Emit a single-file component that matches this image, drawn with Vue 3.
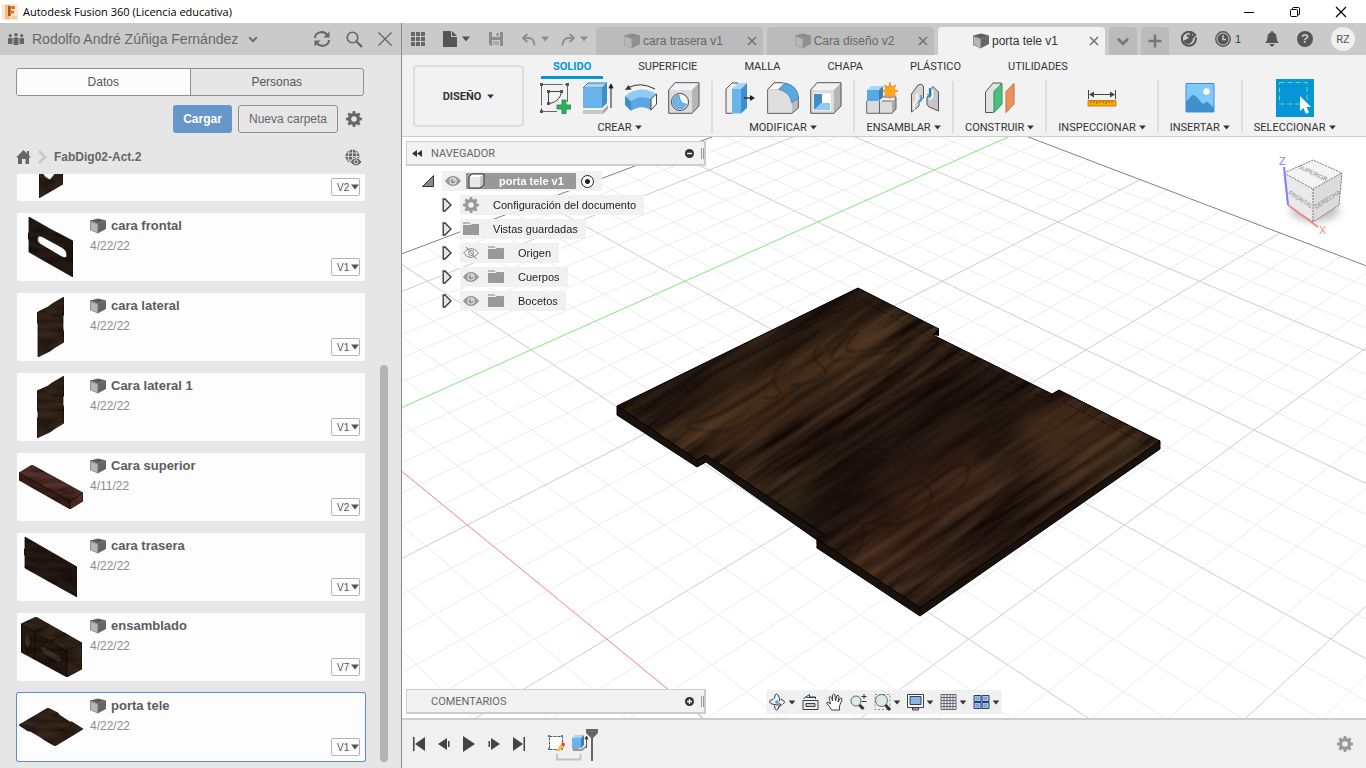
<!-- App.vue -->
<template>
  <div class="window">
    <!-- shared icons and textures -->
    <svg class="defs" aria-hidden="true">
      <defs>
        <symbol id="i-cube" viewBox="0 0 16 16">
          <path d="M0 2.500 8 0.500 16 2.500 8 5.500Z" fill="#5c5c5c" />
          <path d="M7.500 5.500 16 2.500V11L7.500 15.500Z" fill="#666" />
          <path d="M0 2.500 8 5.500V15.500L0 12Z" fill="#777" />
          <path d="M.6 3.800 7.500 6.300V14.700L.6 11.600Z" fill="#b4b7b7" />
        </symbol>
        <symbol id="i-gear" viewBox="0 0 16 16">
          <path fill="currentColor" fill-rule="evenodd" d="M6.800 0h2.400l.4 2.200 1.300.5L12.700 1.500l1.800 1.800-1.200 1.800.5 1.300 2.200.4v2.400l-2.200.4-.5 1.300 1.200 1.800-1.800 1.800-1.800-1.200-1.300.5-.4 2.200H6.800l-.4-2.200-1.300-.5-1.800 1.200-1.800-1.800 1.200-1.800-.5-1.300L0 9.200V6.800l2.200-.4.500-1.300L1.500 3.300l1.800-1.800 1.800 1.200 1.300-.5ZM8 5.200a2.800 2.800 0 1 0 0 5.600 2.800 2.800 0 0 0 0-5.600Z" />
        </symbol>
        <symbol id="i-eye" viewBox="0 0 16 12">
          <path d="M0 6Q3.500 1 8 1t8 5q-3.500 5-8 5T0 6Z" fill="#999" />
          <circle cx="8" cy="6" r="3.600" fill="#f2f2f2" />
          <circle cx="8" cy="6" r="2.600" fill="#999" />
          <circle cx="8.800" cy="5.200" r="1" fill="#f2f2f2" />
        </symbol>
        <symbol id="i-eye-off" viewBox="0 0 16 12">
          <g fill="none" stroke="#888">
            <path d="M.6 6Q4 1.500 8 1.500T15.400 6q-3.400 4.500-7.400 4.500T.6 6Z" />
            <circle cx="8" cy="6" r="2.500" />
            <path d="M3 0 13.500 12" />
          </g>
        </symbol>
        <symbol id="i-folder" viewBox="0 0 16 14">
          <path d="M0 0H6L7.500 1.500V2H0Z" fill="#b8b8b8" />
          <path d="M0 3H7.500L9 2H16V13H0Z" fill="#999" />
        </symbol>
        <symbol id="i-x" viewBox="0 0 10 10">
          <path d="M1 1 9 9M9 1 1 9" fill="none" stroke="currentColor" stroke-width="1.500" />
        </symbol>
        <symbol id="i-caret" viewBox="0 0 8 6">
          <path d="M0 .5H8L4 5.500Z" fill="currentColor" />
        </symbol>
        <symbol id="i-chevron" viewBox="0 0 12 8">
          <path d="M1.500 1.500 6 6 10.500 1.500" fill="none" stroke="currentColor" stroke-width="2.400" />
        </symbol>
        <symbol id="i-expand" viewBox="0 0 10 14">
          <path d="M1.200 1H3L9 7 3 13H1.200Z" fill="#e4e4e4" stroke="#333" stroke-width="1.300" />
        </symbol>
        <filter id="wood" x="0" y="0" width="1" height="1" color-interpolation-filters="sRGB">
          <feTurbulence type="fractalNoise" baseFrequency="0.009 0.11" numOctaves="5" seed="23" />
          <feColorMatrix values=".32 0 0 0 .01  .24 0 0 0 -.01  .16 0 0 0 -.005  0 0 0 0 1" />
        </filter>
        <filter id="wood-thumb" x="0" y="0" width="1" height="1" color-interpolation-filters="sRGB">
          <feTurbulence type="fractalNoise" baseFrequency="0.05 0.2" numOctaves="2" seed="4" result="n" />
          <feColorMatrix in="n" values="0 0 0 0 0  0 0 0 0 0  0 0 0 0 0  .9 0 0 0 -.3" result="d" />
          <feComposite in="d" in2="SourceGraphic" operator="in" result="k" />
          <feMerge>
            <feMergeNode in="SourceGraphic" />
            <feMergeNode in="k" />
          </feMerge>
        </filter>
        <filter id="soft" x="-.5" y="-.5" width="2" height="2" color-interpolation-filters="sRGB"><feGaussianBlur stdDeviation="11" /></filter>
        <filter id="soft-line" x="-.2" y="-.2" width="1.400" height="1.400" color-interpolation-filters="sRGB"><feGaussianBlur stdDeviation="1" /></filter>
        <filter id="shadow" x="-.4" y="-.8" width="1.800" height="2.600" color-interpolation-filters="sRGB"><feGaussianBlur stdDeviation="4" /></filter>
      </defs>
    </svg>

    <header class="titlebar">
      <svg class="logo" width="16" height="16" viewBox="0 0 16 16">
        <rect width="16" height="16" fill="#fbe6d3" />
        <path d="M3 1H8V15H3Z" fill="#f3b988" />
        <path d="M6 2H13V5H9V6.500H12V9.500H9V12H6Z" fill="#d9772b" />
        <path d="M6 2H8V12H6Z" fill="#a8571c" />
        <path d="M9 12H15V15H9Z" fill="#f7cda6" />
      </svg>
      <h1>Autodesk Fusion 360 (Licencia educativa)</h1>
      <div class="window-buttons">
        <button aria-label="Minimizar"><svg width="12" height="12" viewBox="0 0 12 12"><path d="M1 6.500H11" stroke="#000" /></svg></button>
        <button aria-label="Restaurar">
          <svg width="12" height="12" viewBox="0 0 12 12" fill="none" stroke="#000">
            <rect x="1.500" y="3.500" width="7" height="7" rx="1" />
            <path d="M3.500 3V2.500Q3.500 1.500 4.500 1.500H9.500Q10.500 1.500 10.500 2.500V8Q10.500 9 9 9" />
          </svg>
        </button>
        <button aria-label="Cerrar"><svg width="12" height="12" viewBox="0 0 12 12"><path d="M1 1 11 11M11 1 1 11" stroke="#000" stroke-width="1.200" /></svg></button>
      </div>
    </header>

    <div class="body">
      <!-- data panel -->
      <aside class="panel">
        <div class="panel-head">
          <svg width="16" height="12" viewBox="0 0 16 12" fill="#666">
            <circle cx="2.300" cy="2.600" r="1.600" /><circle cx="8" cy="1.800" r="1.800" /><circle cx="13.700" cy="2.600" r="1.600" />
            <path d="M0 5H4.500V11H0ZM5.500 4.500H10.500V12H5.500ZM11.500 5H16V11H11.500Z" />
          </svg>
          <button class="team">Rodolfo André Zúñiga Fernández <svg width="10" height="7"><use href="#i-chevron" /></svg></button>
          <button aria-label="Actualizar">
            <svg width="18" height="16" viewBox="0 0 18 16">
              <path d="M2 7A6.500 6 0 0 1 14 4M16 9A6.500 6 0 0 1 4 12" fill="none" stroke="#666" stroke-width="2" />
              <path d="M16.500 0.500V6.500H10.500ZM1.500 15.500V9.500H7.500Z" fill="#666" />
            </svg>
          </button>
          <button aria-label="Buscar">
            <svg width="17" height="17" viewBox="0 0 17 17" fill="none" stroke="#666">
              <circle cx="6.500" cy="6.500" r="5.300" stroke-width="1.600" />
              <path d="M10.500 10.500 16 16" stroke-width="2.200" />
            </svg>
          </button>
          <button aria-label="Cerrar panel"><svg width="14" height="14" viewBox="0 0 14 14"><path d="M.5.5 13.500 13.500M13.500.5.5 13.500" stroke="#666" stroke-width="1.300" /></svg></button>
        </div>

        <div class="segmented">
          <button :class="{ active: panelTab === 'Datos' }" @click="panelTab = 'Datos'">Datos</button>
          <button :class="{ active: panelTab === 'Personas' }" @click="panelTab = 'Personas'">Personas</button>
        </div>

        <div class="actions">
          <button class="primary">Cargar</button>
          <button class="secondary">Nueva carpeta</button>
          <button class="gear" aria-label="Ajustes"><svg width="16" height="16"><use href="#i-gear" /></svg></button>
        </div>

        <nav class="crumbs">
          <a href="#" aria-label="Inicio">
            <svg width="15" height="14" viewBox="0 0 15 14"><path d="M7.500 0 11 3.500V1H13V5.500L15 7.600H13V14H9.500V9H6V14H2V7.600H0Z" fill="#666" /></svg>
          </a>
          <svg width="9" height="14" viewBox="0 0 9 14"><path d="M1 1 7 7 1 13" fill="none" stroke="#c8c8c8" stroke-width="2.600" /></svg>
          <a href="#" class="project">FabDig02-Act.2</a>
          <svg width="17" height="17" viewBox="0 0 17 17">
            <circle cx="7.500" cy="7.500" r="7" fill="#666" />
            <path d="M7.500 0V15M.5 7.500H14.500M1.500 4H13.500M1.500 11H13.500M4.500 1Q1.500 7 4.500 14M10.500 1Q13.500 7 10.500 14" fill="none" stroke="#e6e6e6" stroke-width=".8" />
            <path d="M5 13Q8 8.500 11 8.500T17 13Q14 17 11 17T5 13Z" fill="#666" stroke="#e6e6e6" />
            <circle cx="11" cy="12.800" r="2" fill="#666" stroke="#e6e6e6" />
          </svg>
        </nav>

        <div class="list-area">
          <ul class="cards">
            <li v-for="item in items" :key="item.id" class="card" :class="{ selected: item.id === selectedId }" @click="selectedId = item.id">
              <svg class="thumb" width="68" height="68" viewBox="0 0 68 68">
                <g filter="url(#wood-thumb)">
                  <path v-for="(s, k) in item.shapes" :key="k" :d="s[0]" :fill="s[1]" fill-rule="evenodd" stroke="#0c0806" stroke-width=".7" />
                </g>
              </svg>
              <div class="info">
                <h2 v-if="item.name"><svg width="16" height="16"><use href="#i-cube" /></svg>{{ item.name }}</h2>
                <p v-if="item.date">{{ item.date }}</p>
              </div>
              <label class="version">
                <select aria-label="Versión"><option>{{ item.version }}</option></select>
                <svg width="8" height="6"><use href="#i-caret" /></svg>
              </label>
            </li>
          </ul>
          <div class="track"><div class="thumb-bar"></div></div>
        </div>
      </aside>

      <main class="main">
        <div class="topbar">
          <div class="quick">
            <button aria-label="Panel de datos">
              <svg width="14" height="14" viewBox="0 0 14 14" fill="#666"><path d="M0 0H4V4H0ZM5 0H9V4H5ZM10 0H14V4H10ZM0 5H4V9H0ZM5 5H9V9H5ZM10 5H14V9H10ZM0 10H4V14H0ZM5 10H9V14H5ZM10 10H14V14H10Z" /></svg>
            </button>
            <button class="file" aria-label="Archivo">
              <svg width="14" height="16" viewBox="0 0 14 16" fill="#555"><path d="M0 0H8V6H14V16H0ZM9 0 14 5H9Z" /></svg>
              <svg width="8" height="6"><use href="#i-caret" /></svg>
            </button>
            <button class="save" aria-label="Guardar">
              <svg width="14" height="14" viewBox="0 0 14 14"><path d="M0 0H14V14H2L0 12Z" fill="#8c8c8c" /><path d="M3 0H11V5H3ZM3 8H11V14H3Z" fill="#cacaca" /><path d="M7.500 1H9.500V4H7.500ZM4 9.500H10V10.500H4ZM4 11.500H10V12.500H4Z" fill="#8c8c8c" /></svg>
            </button>
            <button class="dim" aria-label="Deshacer">
              <svg width="14" height="13" viewBox="0 0 14 13"><path d="M5.500 1 1 5 5.500 9M1.500 5H7Q12 5.500 12.500 12.500" fill="none" stroke="#8f8f8f" stroke-width="2" /></svg>
              <svg width="8" height="6"><use href="#i-caret" /></svg>
            </button>
            <button class="dim" aria-label="Rehacer">
              <svg width="14" height="13" viewBox="0 0 14 13"><path d="M8.500 1 13 5 8.500 9M12.500 5H7Q2 5.500 1.500 12.500" fill="none" stroke="#8f8f8f" stroke-width="2" /></svg>
              <svg width="8" height="6"><use href="#i-caret" /></svg>
            </button>
          </div>
          <div class="docs">
            <div v-for="doc in docs" :key="doc" class="doc" :class="{ active: doc === activeDoc }">
              <button class="doc-name" @click="activeDoc = doc"><svg width="16" height="16"><use href="#i-cube" /></svg>{{ doc }}</button>
              <button class="doc-close" :aria-label="'Cerrar ' + doc"><svg width="10" height="10"><use href="#i-x" /></svg></button>
            </div>
            <button class="square" aria-label="Más documentos"><svg width="14" height="9"><use href="#i-chevron" /></svg></button>
            <button class="square" aria-label="Nuevo diseño"><svg width="14" height="14" viewBox="0 0 14 14"><path d="M7 .5V13.500M.5 7H13.500" stroke="#777" stroke-width="2.600" /></svg></button>
          </div>
          <div class="status">
            <button aria-label="Extensiones">
              <svg width="16" height="16" viewBox="0 0 16 16"><path d="M13.500 3.500A7 7 0 1 0 14.800 6.500" fill="none" stroke="#555" stroke-width="2" /><path d="M2 10Q5 14 9 12.500L11.500 10 12 7.500 15.500 4 14 2 11.500 5 11 1 8.500 1.500 9 4.500 6.500 3 5.500 5 8 7Z" fill="#555" /></svg>
            </button>
            <button class="jobs" aria-label="Estado de trabajos">
              <svg width="16" height="16" viewBox="0 0 16 16"><circle cx="8" cy="8" r="7.200" fill="none" stroke="#555" stroke-width="1.400" /><circle cx="8" cy="8" r="5.500" fill="#555" /><path d="M8 4V8.500H11" fill="none" stroke="#cacaca" stroke-width="1.400" /></svg>
              1
            </button>
            <button aria-label="Notificaciones">
              <svg width="14" height="16" viewBox="0 0 14 16"><path d="M7 0Q8.300 0 8.300 1.600 11.500 2.500 11.500 6.500 11.500 10 14 12H0Q2.500 10 2.500 6.500 2.500 2.500 5.700 1.600 5.700 0 7 0ZM4.800 13H9.200Q9 15.500 7 15.500T4.800 13Z" fill="#555" /></svg>
            </button>
            <button class="help" aria-label="Ayuda">?</button>
            <button class="avatar">RZ</button>
          </div>
        </div>

        <div class="ribbon">
          <button class="workspace">DISEÑO <svg width="7" height="5"><use href="#i-caret" /></svg></button>
          <div class="ribbon-main">
            <nav class="ribbon-tabs">
              <button v-for="tab in ribbonTabs" :key="tab" :class="{ active: tab === ribbonTab }" @click="ribbonTab = tab">{{ tab }}</button>
            </nav>
            <div class="groups">
              <div v-for="g in groups" :key="g.name" class="group">
                <div class="tools">
                  <button v-for="t in g.tools" :key="t" :class="t" :aria-label="g.name + ' ' + t">
                    <svg v-if="t === 'sketch'" width="32" height="32" viewBox="0 0 32 32">
                      <path d="M2.500 2.500H28.500V20M2.500 2.500V29.500H18" fill="none" stroke="#666" stroke-dasharray="21 2.500" />
                      <path d="M9.500 20V9.500H22.500Q21.500 19 11 21.500" fill="none" stroke="#444" />
                      <path d="M1 1H4V4H1ZM27 1H30V4H27ZM1 28H4V31H1ZM8 8H11V11H8ZM21 8H24V11H21ZM8 20H11V23H8Z" fill="#555" />
                      <path d="M23 18H27V23H32V27H27V32H23V27H18V23H23Z" fill="#2bb35a" stroke="#148a3c" stroke-width=".8" />
                    </svg>
                    <svg v-else-if="t === 'extrude'" width="32" height="32" viewBox="0 0 32 32">
                      <path d="M1 28H21L26 23V27L21 32H1Z" fill="#aaa" /><path d="M1 28H21V32H1Z" fill="#c9c9c9" />
                      <path d="M1 6 6 1H25L20 6Z" fill="#a5d5f8" stroke="#3580b5" /><path d="M1 6H20V26H1Z" fill="#6ab4ea" /><path d="M20 6 25 1V21L20 26Z" fill="#3d8fca" />
                      <path d="M29 26V4M27 6 29 2 31 6Z" stroke="#222" fill="#222" />
                    </svg>
                    <svg v-else-if="t === 'revolve'" width="32" height="32" viewBox="0 0 32 32">
                      <path d="M3 6Q15-1 30 7" fill="none" stroke="#333" /><path d="M0 8 3.500 3 6.500 7.500Z" fill="#333" />
                      <path d="M0 14Q14 2 32 12L26 17Q16 12 6 19Z" fill="#90caf5" /><path d="M0 14 6 19V29L0 23Z" fill="#3d8fca" />
                      <path d="M6 19Q16 12 26 17V28Q16 22 6 29Z" fill="#5aa8e2" /><path d="M26 17 31.500 12V22L26 28Z" fill="#fff" stroke="#444" />
                    </svg>
                    <svg v-else-if="t === 'hole'" width="32" height="32" viewBox="0 0 32 32">
                      <path d="M.7 8 7 .7H31L24 8Z" fill="#f2f2f2" /><path d="M24 8 31 .7V24L24 31.300Z" fill="#b5b5b5" /><path d="M.7 8H24V31.300H.7Z" fill="#dcdcdc" />
                      <path d="M.7 8 7 .7H31V24L24 31.300H.7Z" fill="none" stroke="#555" />
                      <circle cx="12" cy="20" r="8.500" fill="#fff" stroke="#444" /><path d="M11 13A7 7 0 1 0 18.500 22Q12 22 11 13Z" fill="#6ab4ea" stroke="#3580b5" stroke-width=".6" />
                    </svg>
                    <svg v-else-if="t === 'press'" width="32" height="32" viewBox="0 0 32 32">
                      <path d="M2 7 8 1H14V26L8 31.300H2Z" fill="#eee" stroke="#555" /><path d="M8 7 14 1H23L17 7Z" fill="#a5d5f8" /><path d="M8 7H17V31.500H8Z" fill="#6ab4ea" /><path d="M17 7 23 1V26L17 31.500Z" fill="#3d8fca" />
                      <path d="M20 16H28" stroke="#222" stroke-width="1.300" /><path d="M26 13 31 16 26 19Z" fill="#222" />
                    </svg>
                    <svg v-else-if="t === 'fillet'" width="32" height="32" viewBox="0 0 32 32">
                      <path d="M.7 31.300V7.500L7 .7H15Q31 3 31.300 17V26L25 31.300Z" fill="#bdbdbd" stroke="#555" />
                      <path d="M1.200 7.500H11Q23 9 25 23V30.800H1.200Z" fill="#dedede" /><path d="M2 7 7.500 1.500H17L11 7Z" fill="#fafafa" />
                      <path d="M12 7.500 18 1Q31 4 31.500 16L25 21Q23 10 12 7.500Z" fill="#5aa8e2" stroke="#3580b5" stroke-width=".7" />
                    </svg>
                    <svg v-else-if="t === 'shell'" width="32" height="32" viewBox="0 0 32 32">
                      <path d="M.7 8 7 .7H31L24 8Z" fill="#f2f2f2" /><path d="M24 8 31 .7V24L24 31.300Z" fill="#b5b5b5" /><path d="M.7 8H24V31.300H.7Z" fill="#dcdcdc" />
                      <path d="M.7 8 7 .7H31V24L24 31.300H.7Z" fill="none" stroke="#555" />
                      <path d="M3.500 11.500H21V28.500H3.500Z" fill="#fff" /><path d="M4 12H12V21L4 28Z" fill="#3d8fca" /><path d="M4 28 11 21H20V28Z" fill="#90caf5" />
                    </svg>
                    <svg v-else-if="t === 'component'" width="32" height="32" viewBox="0 0 32 32">
                      <path d="M.7 19H26V31.300H.7Z" fill="#dcdcdc" /><path d="M26 19 30 15V27L26 31.300Z" fill="#aaa" /><path d="M12 19 16 15H30L26 19Z" fill="#f2f2f2" />
                      <path d="M.7 19V31.300H26L30 27V15H16M13.500 19V31M16 19H26" fill="none" stroke="#666" />
                      <path d="M1 8 5 4H17L13 8Z" fill="#a5d5f8" /><path d="M1 8H13V19H1Z" fill="#5aa8e2" /><path d="M13 8 17 4V15L13 19Z" fill="#3580b5" />
                      <path d="M24 0 25.500 5 29.700 3 28.300 7.200 32 9 28.300 10.800 29.700 15 25.500 13 24 17 22.500 13 18.300 15 19.700 10.800 16 9 19.700 7.200 18.300 3 22.500 5Z" fill="#ffa51f" stroke="#cc7a00" stroke-width=".5" />
                    </svg>
                    <svg v-else-if="t === 'joint'" width="32" height="32" viewBox="0 0 32 32">
                      <path d="M2.500 12 9 3Q13.500 1 14.500 5V16L10 19V24L2.500 30Z" fill="#d4d4d4" stroke="#555" /><path d="M8 12V17L5 22V28" fill="none" stroke="#fff" stroke-width="1.500" />
                      <path d="M29.500 29 20 25Q17 23 18 19V15L21.500 13V7L24 4.500 29.500 10Z" fill="#c6c6c6" stroke="#555" /><path d="M23.500 8V15L20 18" fill="none" stroke="#fff" stroke-width="1.500" />
                      <path d="M12 13V20M20.500 6V14M18.500 12 20.500 15 22.500 12" stroke="#1c8fdc" fill="none" stroke-width="1.300" />
                    </svg>
                    <svg v-else-if="t === 'plane'" width="32" height="32" viewBox="0 0 32 32">
                      <path d="M1.500 10 9 1H17V22L9 30.500H1.500Z" fill="#e2e2e2" stroke="#555" /><path d="M10 9.500 18 1.500V22L10 30.500Z" fill="#4cc07f" stroke="#2c9159" />
                      <path d="M22 9.500 30 1.500V22L22 30.500Z" fill="#e6935f" stroke="#c46f3a" />
                    </svg>
                    <svg v-else-if="t === 'measure'" width="32" height="32" viewBox="0 0 32 32">
                      <path d="M2.500 8V17M29.500 8V17M4 12.500H28" stroke="#444" /><path d="M3 12.500 8 9.500V15.500ZM29 12.500 24 9.500V15.500Z" fill="#444" />
                      <path d="M2 18.500H30V24H2Z" fill="#ffa800" stroke="#b87300" stroke-width=".8" /><path d="M5 19V21M8 19V21M11 19V22M14 19V21M17 19V21M20 19V22M23 19V21M26 19V21" stroke="#7a4c00" stroke-width=".8" />
                    </svg>
                    <svg v-else-if="t === 'image'" width="32" height="32" viewBox="0 0 32 32">
                      <path d="M2 1.500H30V30H2Z" fill="#81c8fb" stroke="#3d8fca" /><path d="M2 20 8 13 11 13.500 19 22 23 19.500 30 26V30H2Z" fill="#3f90cb" /><circle cx="22.500" cy="9.500" r="3.300" fill="#fffbd8" />
                    </svg>
                    <svg v-else width="38" height="38" viewBox="0 0 38 38">
                      <path d="M3.500 3.500H31V25H3.500Z" fill="none" stroke="#5fe08a" stroke-dasharray="5 3" /><path d="M24 17V32L27.500 29 30 35 33 33.500 30.500 28H35Z" fill="#fff" />
                    </svg>
                  </button>
                </div>
                <button class="group-name">{{ g.name }} <svg width="7" height="5"><use href="#i-caret" /></svg></button>
              </div>
            </div>
          </div>
        </div>

        <section class="viewport">
          <svg class="scene" viewBox="402 137 964 581" preserveAspectRatio="xMidYMid slice">
            <defs>
              <clipPath id="floor"><path d="M871 77 2400 660V900H-400V556Z" /></clipPath>
              <clipPath id="top-face"><path :d="topFace" /></clipPath>
            </defs>
            <g clip-path="url(#floor)" fill="none">
              <path :d="grid.minor" stroke="#ececec" />
              <path :d="grid.major" stroke="#cdcdcd" />
              <path :d="grid.red" stroke="#ff9292" />
              <path :d="grid.green" stroke="#8cf58c" />
            </g>
            <path d="M871 77 2400 660M871 77-400 556" fill="none" stroke="#808080" />

            <path d="M617 406V415L697 467 706 462 817 540V548L920 616 1160 449V441L900 450Z" fill="#1a110c" stroke="#000" />
            <path d="M933 335 939 329V336Z" fill="#000" />
            <g clip-path="url(#top-face)">
              <rect class="board" x="540" y="200" width="700" height="500" filter="url(#wood)" />
              <g filter="url(#soft)">
                <path d="M670 440 740 360 880 310 890 350 830 400 740 450Z" fill="#6b4726" opacity=".32" />
                <path d="M740 540 830 440 980 350 1050 410 960 470 840 560Z" fill="#120b0a" opacity=".5" />
                <path d="M830 570 880 480 960 440 1000 480 930 540 870 600Z" fill="#5a3320" opacity=".3" />
                <path d="M1010 410 1070 400 1150 440 1050 480Z" fill="#6b4428" opacity=".35" />
                <path d="M617 400 858 284 890 300 650 430Z" fill="#120c0a" opacity=".5" />
                <path d="M770 500 830 460 790 520Z" fill="#4e4424" opacity=".5" />
                <path d="M1090 500 1130 445 1150 450 1110 485Z" fill="#4e4424" opacity=".5" />
                <ellipse cx="880" cy="507" rx="14" ry="7" fill="#000" opacity=".8" />
              </g>
              <g filter="url(#soft-line)" fill="none" stroke="#0b0605" stroke-width="1.300" opacity=".55">
                <path d="M858 331Q838 352 852 352T915 338M850 334Q812 370 850 358L900 350M848 323Q800 350 820 365T790 385M820 330Q760 375 778 388 784 400 764 398M790 365Q740 410 702 420T725 432Q760 415 800 385" />
                <path d="M852 560Q868 540 862 525 880 520 905 505 925 485 958 465 978 460 960 490M845 535Q870 500 922 482 942 495 920 515 895 530 870 522" />
                <path d="M880 565Q950 500 1010 480M900 585Q970 530 1090 460M640 412Q740 360 810 325M820 460Q900 390 960 365M720 470Q790 410 870 370M750 480Q820 430 880 400" opacity=".6" />
              </g>
            </g>
            <path :d="topFace" fill="none" stroke="#000" />
            <path d="M632 412 862 300 930 337M935 341 1051 402M1063 402 1150 446M920 608V616M697 460V467M817 539V548M1052 394V402" fill="none" stroke="#000" stroke-dasharray="5 2" opacity=".5" />
          </svg>

          <svg class="viewcube" width="80" height="96" viewBox="1272 147 80 96">
            <ellipse cx="1315" cy="210" rx="24" ry="11" fill="#777" opacity=".5" filter="url(#shadow)" />
            <path d="M1284 173 1313 189V222L1288 205Z" fill="#e9e9e9" /><path d="M1313 189 1342 173 1339 205 1313 222Z" fill="#dcdcdc" /><path d="M1284 173 1313 160 1342 173 1313 189Z" fill="#f4f4f4" />
            <path d="M1284 173 1313 160 1342 173 1339 205 1313 222 1288 205ZM1284 173 1313 189 1342 173M1313 189V222" fill="none" stroke="#777" stroke-dasharray="2 1" />
            <path d="M1284 167 1288 205" stroke="#8080ff" stroke-width="2" /><path d="M1288 205 1318 227" stroke="#f58a8a" stroke-width="2" />
            <text class="face" x="1288" y="194" transform="rotate(32 1288 194)">FRONTAL</text>
            <text class="face" x="1316" y="209" transform="rotate(-32 1316 209)">DERECHA</text>
            <text class="face" x="1298" y="168" transform="rotate(26 1298 168)">SUPERIOR</text>
            <text class="axis z" x="1279" y="165">Z</text>
            <text class="axis x" x="1319" y="234">X</text>
          </svg>

          <div class="browser">
            <div class="bar">
              <svg width="10" height="7" viewBox="0 0 10 7"><path d="M5 0V7L0 3.500ZM10 0V7L5 3.500Z" fill="#333" /></svg>
              <span>NAVEGADOR</span>
              <button aria-label="Contraer"><svg width="9" height="9" viewBox="0 0 9 9"><circle cx="4.500" cy="4.500" r="4.500" fill="#333" /><path d="M2 4.500H7" stroke="#fff" stroke-width="1.400" /></svg></button>
              <i class="grip"></i>
            </div>
            <div class="row root">
              <svg class="open" width="12" height="12" viewBox="0 0 12 12"><path d="M11.500.5V11.500H.5Z" fill="#8a8a8a" stroke="#333" /></svg>
              <div class="row-body">
                <svg width="16" height="12"><use href="#i-eye" /></svg>
                <div class="root-name">
                  <svg width="17" height="16" viewBox="0 0 17 16"><path d="M1 4 4 1H16L13 4Z" fill="#fff" /><path d="M1 4H12V15H1Z" fill="#e8e8ee" /><path d="M12 4 16 1V12L12 15Z" fill="#c8c8cc" /><path d="M1 4 4 1H16V12L12 15H1Z" fill="none" stroke="#333" /></svg>
                  porta tele v1
                </div>
                <input type="radio" checked aria-label="Activar componente">
              </div>
            </div>
            <div v-for="node in nodes" :key="node.name" class="row">
              <svg width="10" height="14"><use href="#i-expand" /></svg>
              <div class="row-body">
                <svg v-if="node.icon === 'gear'" class="grey" width="16" height="16"><use href="#i-gear" /></svg>
                <svg v-if="node.eye" width="16" height="12"><use :href="'#' + node.eye" /></svg>
                <svg v-if="node.icon === 'folder'" width="16" height="14"><use href="#i-folder" /></svg>
                <span>{{ node.name }}</span>
              </div>
            </div>
          </div>

          <div class="bar comments">
            <span>COMENTARIOS</span>
            <button aria-label="Expandir"><svg width="9" height="9" viewBox="0 0 9 9"><circle cx="4.500" cy="4.500" r="4.500" fill="#333" /><path d="M2 4.500H7M4.500 2V7" stroke="#fff" stroke-width="1.400" /></svg></button>
            <i class="grip"></i>
          </div>

          <div class="navbar">
            <button aria-label="Órbita">
              <svg width="18" height="18" viewBox="0 0 18 18" fill="none" stroke="#3b3f4a"><path d="M6 12.500Q6 17 8 17T10.500 13M6 5.500Q6 1 8 1T11 5.500V8" /><path d="M5 6Q1 7 1 9 2 12 12 12M12 6Q16.500 7.500 16 9.500L14 11.500M10 10 13 12 10 14.500" /><path d="M8.500 7V11M6.500 9H10.500" stroke="#1c8fdc" /></svg>
              <svg width="7" height="5"><use href="#i-caret" /></svg>
            </button>
            <button aria-label="Mirar a"><svg width="18" height="18" viewBox="0 0 18 18" stroke="#3b3f4a"><path d="M1.500 7.500H16.500V16.500H1.500ZM2 5.500 8 1.500V4H14V6M5 4.500H14" fill="#f0f0f0" /><path d="M4.500 10.500H13.500V13.500H4.500Z" fill="#c9cbd4" /></svg></button>
            <button aria-label="Encuadre"><svg width="18" height="18" viewBox="0 0 18 18"><path d="M6 17Q4 13 1 10 2 8 5 11L3.500 4.500Q4.500 2.500 6 4.500L7 8 7 2Q8.500 0 9.500 2L10 8 11.500 2.500Q13 1.500 13.500 3.500L12.500 9 15 5Q17 5 16.500 7L14 13V17Z" fill="#fff" stroke="#3b3f4a" /></svg></button>
            <button aria-label="Zoom"><svg width="18" height="18" viewBox="0 0 18 18"><circle cx="6.500" cy="8" r="5" fill="#dcebeb" stroke="#5c6a6c" /><path d="M10 12 14 16" stroke="#333" stroke-width="3" /><path d="M14.500 1V6M12 3.500H17M12 8.500H17" stroke="#333" /></svg></button>
            <button aria-label="Ajustar">
              <svg width="18" height="18" viewBox="0 0 18 18"><path d="M1.500 1.500H16.500V16.500H1.500Z" fill="none" stroke="#888" stroke-dasharray="2 2" /><circle cx="8" cy="7.500" r="6" fill="#dcebe6" stroke="#5c6a6c" /><path d="M12 12 16.500 17" stroke="#333" stroke-width="3" /></svg>
              <svg width="7" height="5"><use href="#i-caret" /></svg>
            </button>
            <button aria-label="Visualización">
              <svg width="18" height="18" viewBox="0 0 18 18"><path d="M1 1.500H17V14.500H1Z" fill="#fff" stroke="#3b3f4a" /><path d="M3.500 3.500H14.500V11.500H3.500Z" fill="#8fb4e0" stroke="#27406e" /><path d="M6 15H12V17H6Z" fill="#ddd" stroke="#3b3f4a" /></svg>
              <svg width="7" height="5"><use href="#i-caret" /></svg>
            </button>
            <button aria-label="Rejilla">
              <svg width="18" height="18" viewBox="0 0 18 18"><path d="M1.500 1.500H16.500V16.500H1.500Z" fill="#ececf0" /><path d="M1.500 1.500H16.500V16.500H1.500ZM1.500 4.500H16.500M1.500 7.500H16.500M1.500 10.500H16.500M1.500 13.500H16.500M4.500 1.500V16.500M7.500 1.500V16.500M10.500 1.500V16.500M13.500 1.500V16.500" fill="none" stroke="#666a74" /></svg>
              <svg width="7" height="5"><use href="#i-caret" /></svg>
            </button>
            <button aria-label="Vistas">
              <svg width="18" height="18" viewBox="0 0 18 18"><path d="M1.500 2.500H8.500V8.500H1.500ZM9.500 2.500H16.500V8.500H9.500ZM1.500 9.500H8.500V15.500H1.500ZM9.500 9.500H16.500V15.500H9.500Z" fill="#a8c6ea" stroke="#27406e" /><path d="M3.500 4.500H6V6.500H3.500ZM11.500 4.500H14V6.500H11.500ZM3.500 11.500H6V13.500H3.500ZM11.500 11.500H14V13.500H11.500Z" fill="none" stroke="#6f97cb" /></svg>
              <svg width="7" height="5"><use href="#i-caret" /></svg>
            </button>
          </div>
        </section>

        <footer class="timeline">
          <button aria-label="Inicio"><svg width="12" height="14" viewBox="0 0 12 14"><path d="M0 0H1.500V14H0ZM12 0V14L2 7Z" /></svg></button>
          <button aria-label="Atrás"><svg width="12" height="14" viewBox="0 0 12 14"><path d="M9 1V13L0 7ZM10 4H11.500V10H10Z" /></svg></button>
          <button aria-label="Reproducir"><svg width="12" height="16" viewBox="0 0 12 16"><path d="M0 0 12 8 0 16Z" /></svg></button>
          <button aria-label="Adelante"><svg width="12" height="14" viewBox="0 0 12 14"><path d="M3 1V13L12 7ZM.5 4H2V10H.5Z" /></svg></button>
          <button aria-label="Fin"><svg width="12" height="14" viewBox="0 0 12 14"><path d="M10.500 0H12V14H10.500ZM0 0V14L10 7Z" /></svg></button>
          <svg class="features" width="52" height="34" viewBox="547 727 52 34">
            <path d="M549.500 736.500H562.500V749.500H549.500Z" fill="#fff" stroke="#555" stroke-dasharray="3 1" />
            <path d="M548 735H550V737H548ZM561 735H563V737H561ZM548 748H550V750H548Z" fill="#1c8fdc" />
            <path d="M556 751 561 744 564 747 559 751Z" fill="#ffb93b" /><path d="M561 744 563 742 565 744 564 747Z" fill="#e5403e" />
            <path d="M572 747 581 749 587 745V747L582 751H573Z" fill="#999" />
            <path d="M572 738 575 735H584L581 738Z" fill="#a5d5f8" /><path d="M572 738H581V748H572Z" fill="#6ab4ea" /><path d="M581 738 584 735V745L581 748Z" fill="#3580b5" />
            <path d="M586.500 748V738M585 739 586.500 736 588 739Z" stroke="#333" stroke-width=".8" fill="#333" />
            <path d="M557 754V759.500H580.500V754" fill="none" stroke="#c4c4c4" stroke-width="2" />
            <path d="M586 729H598V733L593 738V761H591V738L586 733Z" fill="#666" />
          </svg>
          <button class="settings" aria-label="Ajustes"><svg width="16" height="16"><use href="#i-gear" /></svg></button>
        </footer>
      </main>
    </div>
  </div>
</template>

<script setup>
import { ref, computed } from 'vue'

const panelTab = ref('Datos')
const selectedId = ref(8)
const activeDoc = ref('porta tele v1')
const ribbonTab = ref('SOLIDO')

const dark = '#35251a'
const side = '#261a13'

const items = [
  { id: 1, version: 'V2', shapes: [['M22 20 46 6V51L22 65ZM25 38Q28 30 37 30L40 36Q38 42 33 47 26 44 25 38Z', dark]] },
  { id: 2, name: 'cara frontal', date: '4/22/22', version: 'V1', shapes: [['M12 4 33 16 56 28V64L33 51 12 39V26H11V20H12ZM21 24Q19 28 23 31L45 44Q50 46 50 42 50 38 46 35L26 24Q22 22 21 24Z', side]] },
  { id: 3, name: 'cara lateral', date: '4/22/22', version: 'V1', shapes: [['M21 19 31 14 35 11 47 4V22H46V38H47V49L37 55 33 58 21 64V54 30H20V20Z', dark]] },
  { id: 4, name: 'Cara lateral 1', date: '4/22/22', version: 'V1', shapes: [['M20 18 31 13 35 10 47 3V23H46V33H47V50L37 56 33 59 20 65V45H21V38H20Z', dark]] },
  { id: 5, name: 'Cara superior', date: '4/11/22', version: 'V2', shapes: [['M15 12 66 40 53 48 2 20Z', '#55302a'], ['M2 20 53 48V56L2 27Z', '#3b1d16'], ['M53 48 66 40V48L53 56Z', '#5c2f25']] },
  { id: 6, name: 'cara trasera', date: '4/22/22', version: 'V1', shapes: [['M8 4 60 34V64L8 35V22H7V16H8Z', side]] },
  { id: 7, name: 'ensamblado', date: '4/22/22', version: 'V7', shapes: [['M19 4 65 30 50 38 4 11Z', dark], ['M4 11 50 38V64L4 39Z', side], ['M50 38 65 30V56L50 64Z', dark], ['M23 35Q24 32 28 34L43 43Q46 48 43 50L26 41Z', '#3f2d20'], ['M7 25Q9 19 13 23 15 33 11 36 7 33 7 25Z', '#3f2d20'], ['M18 19V47M18 19 32 12M34 28 49 20', 'none']] },
  { id: 8, name: 'porta tele', date: '4/22/22', version: 'V1', shapes: [['M31 15 41 20 42 22 53 29 55 29 66 36 38 53 26 46 25 45 13 38 11 38 2 32Z', dark]] }
]

const docs = ['cara trasera v1', 'Cara diseño v2', 'porta tele v1']
const ribbonTabs = ['SOLIDO', 'SUPERFICIE', 'MALLA', 'CHAPA', 'PLÁSTICO', 'UTILIDADES']

const groups = [
  { name: 'CREAR', tools: ['sketch', 'extrude', 'revolve', 'hole'] },
  { name: 'MODIFICAR', tools: ['press', 'fillet', 'shell'] },
  { name: 'ENSAMBLAR', tools: ['component', 'joint'] },
  { name: 'CONSTRUIR', tools: ['plane'] },
  { name: 'INSPECCIONAR', tools: ['measure'] },
  { name: 'INSERTAR', tools: ['image'] },
  { name: 'SELECCIONAR', tools: ['select'] }
]

const nodes = [
  { name: 'Configuración del documento', icon: 'gear' },
  { name: 'Vistas guardadas', icon: 'folder' },
  { name: 'Origen', icon: 'folder', eye: 'i-eye-off' },
  { name: 'Cuerpos', icon: 'folder', eye: 'i-eye' },
  { name: 'Bocetos', icon: 'folder', eye: 'i-eye' }
]

const topFace = 'M617 406 858 288 939 329 933 335 1052 394 1059 390 1160 441 920 608 817 539 825 535 706 455 697 460Z'

// Perspective floor: two families of lines, each through its own vanishing point
const grid = computed(() => {
  const left = [-906, -600]
  const right = [2660, -600]
  const base = 718
  const step = 77
  const line = (p, x) => `M${p[0]} ${p[1]}L${x} ${base}`
  let minor = ''
  let major = ''
  for (let i = -25; i < 24; i++) {
    const d = line(left, 703 + i * step)
    if (i % 5 === 0) major += d
    else minor += d
  }
  for (let j = -6; j < 34; j++) {
    const d = line(right, -294 + j * step)
    if (j % 5 === 0) major += d
    else minor += d
  }
  return { minor, major, red: line(left, 703), green: line(right, -294) }
})
</script>

<style>
body {
  background: #f0f0f0;
}
</style>

<style scoped>
.window {
  height: 100vh;
  display: flex;
  flex-direction: column;
  overflow: hidden;
  font-family: "Liberation Sans", Arial, sans-serif;
  font-size: 12px;
  color: #333;
}

.window * {
  box-sizing: border-box;
}

button,
select {
  font: inherit;
  color: inherit;
  background: none;
  border: none;
  padding: 0;
  cursor: pointer;
}

svg {
  flex: none;
  display: block;
}

.defs {
  position: absolute;
  width: 0;
  height: 0;
}

.titlebar {
  flex: none;
  height: 23px;
  display: flex;
  align-items: center;
  gap: 5px;
  padding-left: 2px;
  background: #fff;
}

.titlebar h1 {
  flex: 1;
  margin: 0;
  font: 400 11px "Open Sans", sans-serif;
  color: #000;
}

.window-buttons {
  display: flex;
  padding-right: 2px;
}

.window-buttons button {
  width: 46px;
  height: 21px;
  display: grid;
  place-items: center;
}

.body {
  flex: 1;
  min-height: 0;
  display: flex;
}

.panel {
  flex: none;
  width: 402px;
  display: flex;
  flex-direction: column;
  background: #e6e6e6;
  border-right: 1px solid #8a8a8a;
}

.panel-head {
  height: 32px;
  display: flex;
  align-items: center;
  gap: 15px;
  padding: 0 9px 0 8px;
  background: #cacaca;
}

.team {
  flex: 1;
  display: flex;
  align-items: center;
  gap: 10px;
  margin-left: -7px;
  font-size: 14px;
  color: #666;
}

.segmented {
  display: flex;
  height: 28px;
  margin: 13px 37px 0 16px;
  border: 1px solid #8f8f8f;
  border-radius: 3px;
}

.segmented button {
  flex: 1;
  color: #555;
}

.segmented .active {
  background: #fcfcfc;
  border-right: 1px solid #8f8f8f;
  border-radius: 2px 0 0 2px;
}

.actions {
  display: flex;
  justify-content: flex-end;
  align-items: center;
  gap: 6px;
  margin: 9px 39px 0 0;
}

.actions button {
  height: 28px;
}

.primary {
  width: 59px;
  background: #6796ca;
  border-radius: 3px;
  color: #fff;
  font-weight: bold;
}

.secondary {
  width: 100px;
  border: 1px solid #8f8f8f;
  border-radius: 3px;
  color: #666;
}

.gear {
  margin-left: 2px;
  color: #666;
}

.crumbs {
  display: flex;
  align-items: center;
  gap: 7px;
  height: 41px;
  padding: 7px 39px 0 16px;
}

.project {
  flex: 1;
  color: #666;
  font-weight: bold;
  text-decoration: none;
}

.list-area {
  flex: 1;
  min-height: 0;
  display: flex;
  gap: 14px;
  padding: 0 13px 6px 16px;
}

.cards {
  flex: 1;
  display: flex;
  flex-direction: column;
  justify-content: flex-end;
  gap: 12px;
  margin: 0;
  padding: 0 1px 1px;
  overflow: hidden;
  list-style: none;
}

.card {
  flex: none;
  height: 68px;
  display: flex;
  background: #fdfdfd;
  border-radius: 2px;
}

.card.selected {
  box-shadow: 0 0 0 1px #5b8fce;
}

.info {
  flex: 1;
  padding: 3px 0 0 5px;
  line-height: 20px;
}

.info h2 {
  display: flex;
  align-items: center;
  gap: 5px;
  margin: 0;
  font-size: 13px;
  color: #5c5c5c;
}

.info p {
  margin: 0;
  color: #8c8c8c;
}

.version {
  align-self: flex-end;
  display: flex;
  align-items: center;
  gap: 1px;
  width: 29px;
  height: 18px;
  margin: 0 5px 5px 0;
  padding-left: 5px;
  border: 1px solid #b5b5b5;
  border-radius: 2px;
  color: #555;
}

.version select {
  width: 13px;
  font-size: 10px;
  appearance: none;
}

.track {
  width: 8px;
  display: flex;
  align-items: flex-end;
}

.thumb-bar {
  width: 100%;
  height: 67.500%;
  border-radius: 4px;
  background: #b4b4b4;
}

.main {
  flex: 1;
  min-width: 0;
  display: flex;
  flex-direction: column;
}

.topbar {
  flex: none;
  height: 32px;
  display: flex;
  background: #cacaca;
}

.quick {
  display: flex;
  align-items: center;
  gap: 12px;
  width: 194px;
  padding-left: 9px;
}

.quick button {
  display: flex;
  align-items: center;
  gap: 5px;
  color: #555;
}

.quick .file {
  margin: 0 7px 0 6px;
}

.quick .save {
  margin-right: 7px;
}

.quick .dim {
  color: #8f8f8f;
}

.docs {
  flex: 1;
  display: flex;
  gap: 4px;
  padding-top: 4px;
}

.doc {
  flex: 1;
  display: flex;
  padding: 0 6px 0 4px;
  background: #bbb;
  border-radius: 4px 4px 0 0;
  color: #666;
}

.doc.active {
  background: #f2f2f2;
  color: #333;
}

.doc:not(.active) .doc-name svg {
  opacity: 0.5;
}

.doc-name {
  flex: 1;
  display: flex;
  align-items: center;
  justify-content: center;
  gap: 3px;
}

.doc-close {
  color: #707070;
}

.square {
  width: 28px;
  display: grid;
  place-items: center;
  background: #bbb;
  border-radius: 4px 4px 0 0;
  color: #777;
}

.status {
  display: flex;
  align-items: center;
  justify-content: space-between;
  width: 197px;
  padding: 0 11px 0 12px;
}

.jobs {
  display: flex;
  align-items: center;
  gap: 4px;
  font-size: 11px;
  margin-right: 6px;
}

.help {
  width: 16px;
  height: 16px;
  border-radius: 50%;
  background: #555;
  color: #cacaca;
  font-size: 13px;
  font-weight: bold;
  line-height: 16px;
}

.avatar {
  width: 24px;
  height: 24px;
  border-radius: 50%;
  background: #f0f0f0;
  font: 11px Roboto, sans-serif;
  color: #555;
}

.ribbon {
  flex: none;
  display: flex;
  height: 82px;
  background: #f2f2f2;
  border-bottom: 1px solid #ccc;
  font: 11px Roboto, sans-serif;
}

.workspace {
  width: 111px;
  height: 62px;
  margin: 10px 0 0 11px;
  display: flex;
  align-items: center;
  justify-content: center;
  gap: 6px;
  border: 2px solid #ddd;
  border-radius: 4px;
  font-weight: bold;
}

.ribbon-tabs {
  display: flex;
  gap: 23px;
  padding-left: 17px;
}

.ribbon-tabs button {
  height: 24px;
  padding: 1px 12px 0;
  border-bottom: 3px solid transparent;
}

.ribbon-tabs .active {
  color: #0696d7;
  border-color: #0696d7;
  font-weight: bold;
}

.groups {
  display: flex;
  padding-left: 4px;
}

.group {
  height: 52px;
  margin-top: 2px;
  padding: 1px 11px 0;
  display: flex;
  flex-direction: column;
  align-items: center;
}

.group + .group {
  border-left: 2px solid #dedede;
}

.tools {
  display: flex;
  gap: 11px;
  height: 32px;
}

.tools .select {
  height: 38px;
  margin-top: -3px;
  background: #0696d7;
}

.group-name {
  display: flex;
  align-items: center;
  gap: 3px;
  height: 14px;
  margin-top: 7px;
}

.viewport {
  flex: 1;
  min-height: 0;
  position: relative;
  overflow: hidden;
  background: #fff;
}

.scene {
  position: absolute;
  inset: 0;
  width: 100%;
  height: 100%;
}

.board {
  transform: rotate(-34deg);
  transform-origin: 890px 450px;
}

.viewcube {
  position: absolute;
  top: 10px;
  right: 14px;
}

.face {
  font-size: 6px;
  fill: #888;
}

.axis {
  font-size: 11px;
}

.axis.z {
  fill: #8080ff;
}

.axis.x {
  fill: #f58a8a;
}

.browser {
  position: absolute;
  top: 4px;
  left: 4px;
  width: 300px;
  display: flex;
  flex-direction: column;
  gap: 4px;
  font-size: 11px;
}

.bar {
  display: flex;
  align-items: center;
  gap: 9px;
  height: 25px;
  padding-left: 5px;
  background: #f2f2f2;
  border: 1px solid #ccc;
  border-width: 1px 2px 2px 1px;
  font: 11px Roboto, sans-serif;
  color: #666;
}

.bar span {
  flex: 1;
}

.grip {
  width: 3px;
  height: 11px;
  margin-left: -2px;
  border: 1px solid #999;
  border-width: 0 1px;
}

.comments {
  position: absolute;
  left: 4px;
  bottom: 4px;
  width: 300px;
  padding-left: 24px;
}

.row {
  display: flex;
  align-items: center;
  gap: 8px;
  height: 20px;
  margin-left: 36px;
}

.row.root {
  margin: 1px 0 0 16px;
}

.row-body {
  display: flex;
  align-items: center;
  gap: 9px;
  height: 20px;
  padding: 0 8px 0 3px;
  background: rgba(240, 240, 240, 0.95);
  color: #222;
}

.row-body span {
  margin-left: 5px;
}

.root .row-body {
  gap: 5px;
  padding-right: 8px;
}

.grey {
  color: #999;
}

.root-name {
  display: flex;
  align-items: center;
  gap: 14px;
  width: 110px;
  height: 16px;
  padding-left: 2px;
  background: #999;
  color: #fff;
  font-weight: bold;
  white-space: nowrap;
}

.root input {
  width: 13px;
  height: 13px;
  margin: 0;
  appearance: none;
  border: 1px solid #222;
  border-radius: 50%;
  background: radial-gradient(circle, #222 2px, #fff 3px);
}

.navbar {
  position: absolute;
  bottom: 4px;
  left: 50%;
  transform: translateX(-50%);
  display: flex;
  align-items: center;
  gap: 8px;
  height: 24px;
  padding: 0 2px;
  background: #f0f0f0;
}

.navbar button {
  display: flex;
  align-items: center;
  gap: 2px;
  color: #333;
}

.navbar button + button {
  margin-left: -2px;
}

.timeline {
  flex: none;
  height: 50px;
  display: flex;
  align-items: center;
  gap: 13px;
  padding: 0 13px 0 11px;
  background: #f0f0f0;
  border-top: 2px solid #ccc;
  fill: #444;
}

.features {
  margin-left: 9px;
}

.settings {
  margin-left: auto;
  fill: currentColor;
  color: #999;
}
</style>
